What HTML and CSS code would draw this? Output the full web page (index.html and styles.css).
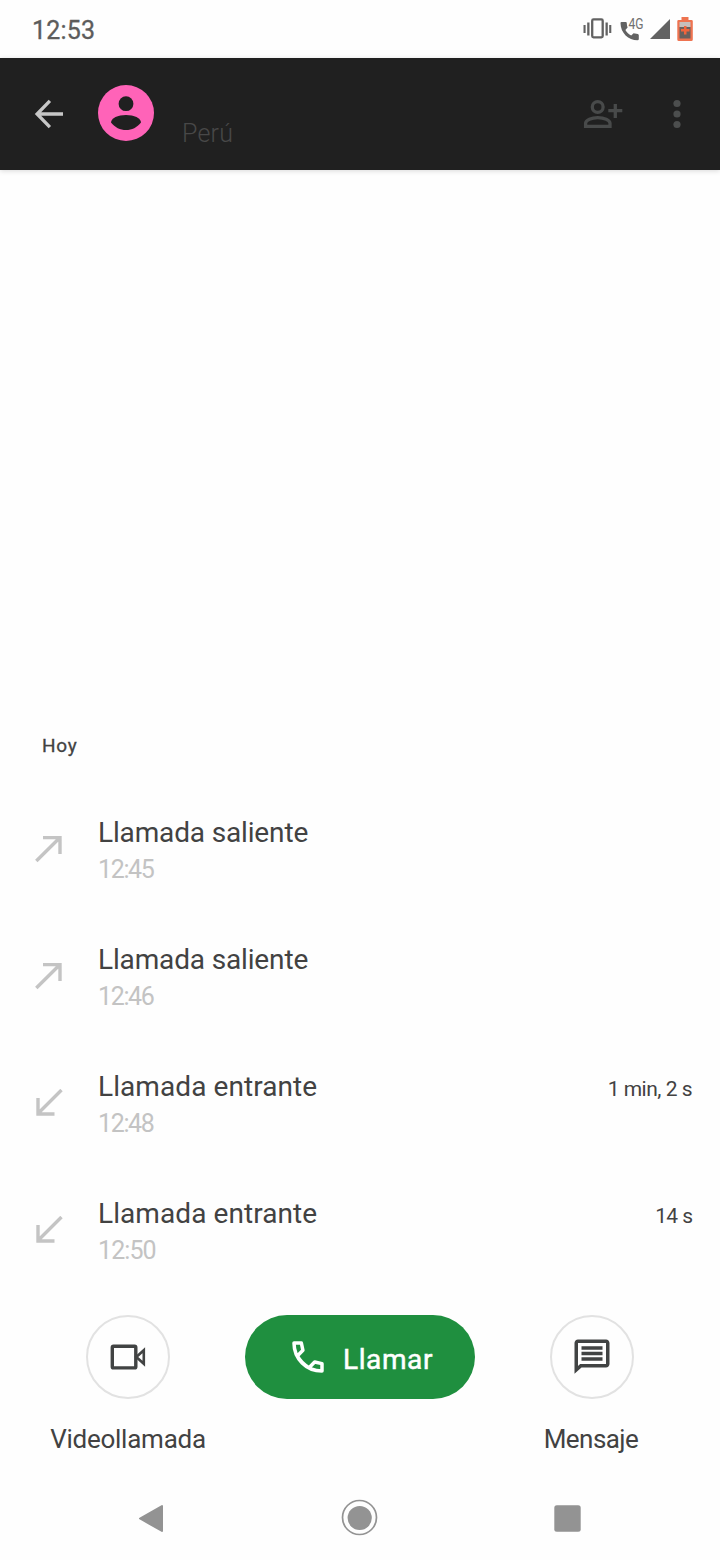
FILE: index.html
```html
<!DOCTYPE html>
<html lang="es">
<head>
<meta charset="utf-8">
<title>Llamadas</title>
<link rel="stylesheet" href="styles.css">
</head>
<body>
<div class="status">
  <time class="clock">12:53</time>
  <svg class="status-icons" width="112" height="30" viewBox="583 14 112 30">
    <g fill="#626262">
      <path d="M583.500 25h2.100v8h-2.100zM587.200 22.500h2.300v13h-2.300zM605.500 22.500h2.300v13h-2.300zM609.200 25h2.100v8h-2.100z"/>
      <rect x="592.200" y="19.400" width="10.500" height="18" rx="1.300" fill="none" stroke="#626262" stroke-width="2.300"/>
      <path d="M621.500 22h4.300q1 0 1 1.200c0 1.500.3 2.900.8 4.200l-2.200 2.500c1.400 2.400 3.400 4.300 5.800 5.600l2.400-2.300 4.200.8q1 .2 1 1.200v3.900q0 1.200-1.300 1.200C628.500 40.300 620.500 33 620.500 23q0-1 1-1z"/>
      <path d="M670 19v20h-20z"/>
    </g>
    <text class="network" x="628.500" y="29" textLength="15" lengthAdjust="spacingAndGlyphs">4G</text>
    <path d="M681.500 17h7v3h3q1.300 0 1.300 1.300v18.200q0 1.500-1.500 1.500h-12.500q-1.500 0-1.500-1.500V21.300q0-1.300 1.300-1.300h2.900z" fill="#ee7350"/>
    <path d="M679.500 22h11v5h-11z" fill="#c5bfbc"/>
    <path d="M679.500 27h11v11.500h-11z" fill="#68605d"/>
    <path d="M684 26h2.500v3h3v2.600h-3v3H684v-3h-3V29h3z" fill="#f0643c"/>
  </svg>
</div>
<header class="appbar">
  <svg class="back" width="42" height="42" viewBox="0 0 24 24"><path d="M12.500 4.500L5.200 12l7.300 7.500M5.200 12H20" fill="none" stroke="#c7c7c7" stroke-width="1.900"/></svg>
  <svg class="avatar" width="56" height="56" viewBox="0 0 56 56"><circle cx="28" cy="28" r="28" fill="#ff63b8"/><circle cx="28" cy="18.700" r="7.400" fill="#202020"/><path d="M13 37.500C13 33 20 30 28 30s15 3 15 7.500c-4 5-9 7.500-15 7.500s-11-2.500-15-7.500z" fill="#202020"/></svg>
  <span class="country">Perú</span>
  <svg class="add" width="40" height="30" viewBox="583 99 40 30" fill="none" stroke="#484a4a" stroke-width="3.300"><circle cx="597.700" cy="107" r="5.400"/><path d="M585.600 126.300v-3c0-3.200 6-5.700 12.200-5.700s12.200 2.500 12.200 5.700v3zM615.300 104v14M608.300 110.700h14"/></svg>
  <svg class="more" width="8" height="30" viewBox="0 0 8 30" fill="#4c4e4e"><circle cx="4" cy="4.500" r="3.600"/><circle cx="4" cy="15" r="3.600"/><circle cx="4" cy="25.500" r="3.600"/></svg>
</header>
<main class="history">
  <h2 class="day">Hoy</h2>
  <ul class="calls">
    <li class="call">
      <svg class="direction" width="28" height="28" viewBox="0 0 28 28"><path d="M1.300 26L24.500 3M8 2.600h17v16.500"/></svg>
      <div class="details"><span class="kind out">Llamada saliente</span><time class="time">12:45</time></div>
    </li>
    <li class="call">
      <svg class="direction" width="28" height="28" viewBox="0 0 28 28"><path d="M1.300 26L24.500 3M8 2.600h17v16.500"/></svg>
      <div class="details"><span class="kind out">Llamada saliente</span><time class="time">12:46</time></div>
    </li>
    <li class="call">
      <svg class="direction" width="28" height="28" viewBox="0 0 28 28"><path d="M26.500 1L3.500 24M3 9v16h16.500"/></svg>
      <div class="details"><span class="kind in">Llamada entrante</span><time class="time">12:48</time></div>
      <span class="duration">1 min, 2 s</span>
    </li>
    <li class="call">
      <svg class="direction" width="28" height="28" viewBox="0 0 28 28"><path d="M26.500 1L3.500 24M3 9v16h16.500"/></svg>
      <div class="details"><span class="kind in">Llamada entrante</span><time class="time last">12:50</time></div>
      <span class="duration short">14 s</span>
    </li>
  </ul>
</main>
<div class="actions">
  <button class="action">
    <span class="round"><svg width="42" height="42" viewBox="0 0 42 42" fill="none" stroke="#414343" stroke-width="3.400"><rect x="5.300" y="10.300" width="23.500" height="21.600" rx="1.200"/><path d="M29.300 21l7.500-6.800v13.600z" stroke-width="2.600"/></svg></span>
    <span class="label video">Videollamada</span>
  </button>
  <button class="dial">
    <svg width="42" height="42" viewBox="0 0 24 24" fill="none" stroke="#fff" stroke-width="2"><path d="M4 4h4.200l.9 4.200-3.200 3.200c1.600 2.900 3.800 5.100 6.700 6.700l3.200-3.200 4.200.9V20C11 20 4 13 4 4z" stroke-linejoin="round"/></svg>
    <span class="dial-label">Llamar</span>
  </button>
  <button class="action">
    <span class="round"><svg width="42" height="42" viewBox="0 0 24 24" fill="#414343"><path d="M20 2H4c-1.100 0-2 .9-2 2v17.500L6 18h14c1.100 0 2-.9 2-2V4c0-1.100-.9-2-2-2zm0 14H5.200L4 17.200V4h16v12z"/><path d="M6 5.800h12v2H6zM6 9h12v2H6zM6 12.100h12v2H6z"/></svg></span>
    <span class="label message">Mensaje</span>
  </button>
</div>
<nav class="system-nav">
  <svg width="26" height="30" viewBox="0 0 26 30"><path d="M2 15.500L24 3v25z" fill="#939393" stroke="#939393" stroke-width="2" stroke-linejoin="round"/></svg>
  <svg width="38" height="38" viewBox="0 0 38 38"><circle cx="19.500" cy="18.500" r="17" fill="none" stroke="#939393" stroke-width="1.700"/><circle cx="19.700" cy="19" r="12.100" fill="#939393"/></svg>
  <svg class="recents" width="27" height="27" viewBox="0 0 27 27"><rect x=".3" y=".3" width="26.400" height="26.400" rx="2.500" fill="#939393"/></svg>
</nav>
</body>
</html>
```
FILE: styles.css
```css
* { box-sizing: border-box; }
body {
  display: flex;
  flex-direction: column;
  width: 720px;
  height: 1560px;
  margin: 0;
  background: #fefefe;
  color: #424242;
  font-family: Roboto, sans-serif;
  overflow: hidden;
}
svg { display: block; flex: none; }
button { border: 0; padding: 0; background: none; color: inherit; font: inherit; }
.status { display: flex; justify-content: space-between; height: 58px; padding: 14px 25px 0 32px; }
.clock { font-size: 25px; line-height: 34px; font-weight: 400; color: #5c5c5c; letter-spacing: .2px; -webkit-text-stroke: .3px #5c5c5c; }
.network { font-size: 14px; font-weight: 400; fill: #707070; }
.appbar {
  display: flex;
  align-items: center;
  height: 112px;
  flex: none;
  padding: 0 39px 0 28px;
  background: #202020;
  box-shadow: 0 1px 5px rgba(0, 0, 0, .15);
}
.avatar { margin: -2px 0 0 28px; }
.country { margin: 39px auto 0 28px; font-size: 25px; line-height: 30px; font-weight: 300; color: #484848; letter-spacing: .2px; }
.more { margin-left: 50px; }
.history { display: flex; flex-direction: column; justify-content: flex-end; height: 1112px; }
.day { margin: 0 0 42px 42px; font-size: 19px; line-height: 24px; font-weight: 400; letter-spacing: .8px; -webkit-text-stroke: .3px #424242; }
.calls { margin: 0; padding: 0; list-style: none; }
.call { display: flex; height: 127px; padding: 15px 28px 0 35px; }
.call:last-child { height: 101px; }
.direction { margin-top: 20px; fill: none; stroke: #c4c4c4; stroke-width: 3.4; }
.details { display: flex; flex-direction: column; flex: 1; padding-left: 35px; }
.kind { font-size: 28px; line-height: 36px; }
.out { letter-spacing: -.15px; }
.in { letter-spacing: .08px; }
.time { margin-top: 2px; font-size: 25px; line-height: 34px; color: #c3c3c3; letter-spacing: -1.35px; }
.last { letter-spacing: -.9px; }
.duration { margin-top: 4px; font-size: 21px; line-height: 32px; letter-spacing: -.5px; }
.short { letter-spacing: -1px; word-spacing: 1px; }
.actions { display: flex; justify-content: space-between; height: 180px; padding: 33px 48px 0; }
.action { display: flex; flex-direction: column; align-items: center; width: 160px; }
.round { display: flex; align-items: center; justify-content: center; width: 84px; height: 84px; border: 2px solid #e2e2e2; border-radius: 50%; }
.label { margin-top: 23px; font-size: 26px; line-height: 34px; }
.video { letter-spacing: -.25px; }
.message { padding-right: 2px; letter-spacing: -.55px; }
.dial { display: flex; align-items: center; width: 230px; height: 84px; padding-left: 42px; gap: 14px; border-radius: 42px; background: #1f8f3f; color: #fff; }
.dial-label { font-size: 28px; line-height: 36px; font-weight: 400; padding-top: 5px; letter-spacing: .6px; -webkit-text-stroke: .5px #fff; }
.system-nav { display: flex; align-items: center; justify-content: space-between; height: 98px; padding: 13px 139px 0 138px; }
.recents { margin-top: 2px; }
```
